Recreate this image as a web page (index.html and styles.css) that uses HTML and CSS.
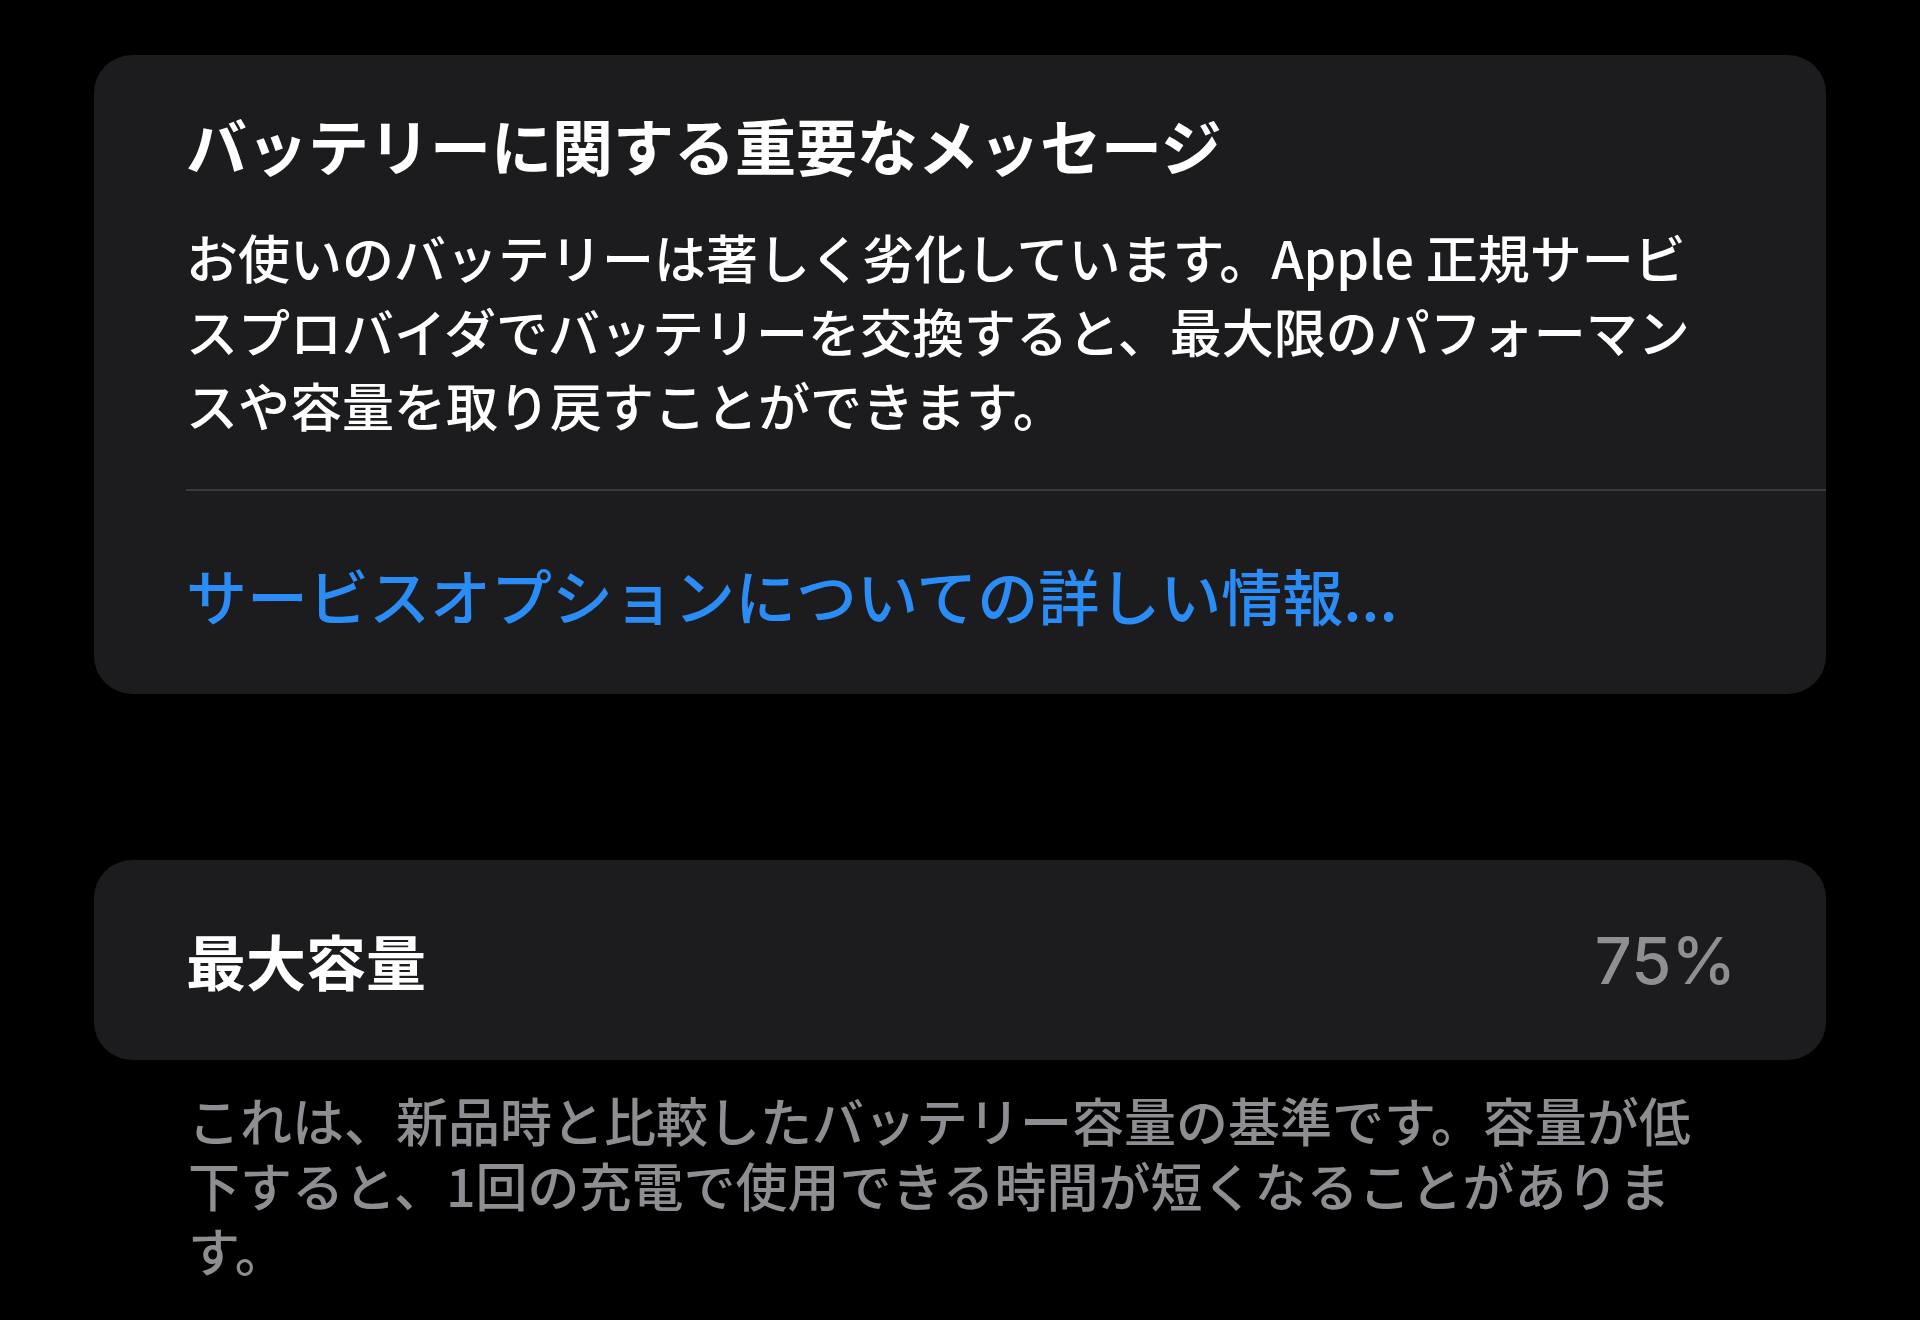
FILE: index.html
```html
<!DOCTYPE html>
<html lang="ja">

<head>
  <meta charset="UTF-8">
  <meta name="viewport" content="width=device-width, initial-scale=1.0">
  <title>バッテリーの状態</title>
  <link rel="stylesheet" href="styles.css">
</head>

<body class="page">
  <div class="settings-list">
    <!-- important message -->
    <section class="group-card message-card">
      <h2 class="message-title">バッテリーに関する重要なメッセージ</h2>
      <p class="message-text">お使いのバッテリーは著しく劣化しています。Apple 正規サービスプロバイダでバッテリーを交換すると、最大限のパフォーマンスや容量を取り戻すことができます。</p>
      <div class="row-divider"></div>
      <a class="message-link" href="#">サービスオプションについての詳しい情報...</a>
    </section>

    <!-- max capacity -->
    <section class="group-card capacity-card">
      <span class="capacity-label">最大容量</span>
      <span class="capacity-value">75%</span>
    </section>
    <p class="group-footer">これは、新品時と比較したバッテリー容量の基準です。容量が低下すると、1回の充電で使用できる時間が短くなることがあります。</p>
  </div>
</body>

</html>
```

FILE: styles.css
```css
.page {
  margin: 0;
  background-color: #000;
  font-family: "Noto Sans CJK JP", "Noto Sans", sans-serif;
  color: #fff;
}

.settings-list {
  width: 1732px;
  padding: 55px 0 0 94px;
}

.group-card {
  background-color: #1c1c1e;
  border-radius: 38px;
}

.message-card {
  padding: 54px 0 63px 92px;
}

.message-title {
  margin: 0;
  font-size: 61px;
  line-height: 72px;
  font-weight: 700;
}

.message-text {
  margin: 39px 0 0;
  max-width: 1530px;
  font-size: 52px;
  line-height: 74px;
  font-weight: 500;
}

.row-divider {
  height: 2px;
  margin-top: 47px;
  background-color: #3a3a3d;
}

.message-link {
  display: block;
  margin-top: 68px;
  font-size: 61px;
  line-height: 72px;
  font-weight: 500;
  color: #2a8cf4;
  text-decoration: none;
}

.capacity-card {
  margin-top: 166px;
  height: 200px;
  padding: 0 90px 0 92px;
  box-sizing: border-box;
  display: flex;
  align-items: center;
  justify-content: space-between;
}

.capacity-label {
  font-size: 60px;
  font-weight: 700;
  line-height: 72px;
}

.capacity-value {
  font-family: Inter, "Noto Sans", sans-serif;
  font-size: 65px;
  font-weight: 500;
  color: #8e8e93;
}

.group-footer {
  margin: 27px 0 0;
  padding-left: 94px;
  max-width: 1530px;
  font-size: 52px;
  line-height: 65px;
  font-weight: 500;
  color: #8d8d92;
}
```
